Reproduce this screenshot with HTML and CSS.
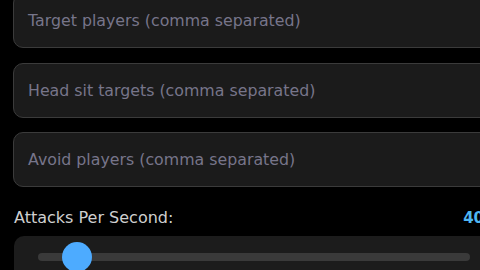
FILE: index.html
```html
<!DOCTYPE html>
<html>
<head>
<meta charset="utf-8">
<link rel="stylesheet" href="styles.css">
</head>
<body>
<div class="page">
  <div class="field"><span class="ph">Target players (comma separated)</span></div>
  <div class="field"><span class="ph">Head sit targets (comma separated)</span></div>
  <div class="field"><span class="ph">Avoid players (comma separated)</span></div>
  <div class="label-row">
    <span class="label">Attacks Per Second:</span>
    <span class="value">40</span>
  </div>
  <div class="slider-box">
    <div class="track">
      <div class="thumb" style="left: 9.1%"></div>
    </div>
  </div>
</div>
</body>
</html>
```
FILE: styles.css
```css
html, body {
  margin: 0;
  padding: 0;
  background: #000;
  overflow: hidden;
}
body {
  width: 480px;
  height: 270px;
}
.page {
  width: 481px;
  margin-top: -7px;
  padding-left: 13px;
  display: flex;
  flex-direction: column;
  gap: 14.5px;
  font-family: "DejaVu Sans", sans-serif;
}
.field {
  box-sizing: border-box;
  height: 55px;
  background: #1b1b1b;
  border: 1px solid #3b3b3b;
  border-radius: 10px;
  padding: 0 14px;
  display: flex;
  align-items: center;
}
.ph {
  color: #77758a;
  font-size: 15.8px;
  white-space: nowrap;
}
.label-row {
  display: flex;
  justify-content: space-between;
  align-items: baseline;
  padding-left: 1px;
  margin-top: 6px;
  height: 20px;
}
.label {
  color: #cfcfcf;
  font-size: 16px;
}
.value {
  color: #4fb6f2;
  font-size: 15px;
  font-weight: bold;
  padding-right: 10px;
}
.slider-box {
  margin-top: -6px;
  margin-left: 1px;
  box-sizing: border-box;
  height: 60px;
  background: #1c1c1c;
  border-radius: 10px;
  padding: 16.5px 24px 0;
}
.track {
  position: relative;
  height: 8px;
  border-radius: 4px;
  background: #3a3a3a;
}
.thumb {
  position: absolute;
  top: -11px;
  width: 30px;
  height: 30px;
  margin-left: -15px;
  border-radius: 50%;
  background: #4dabff;
}
```
